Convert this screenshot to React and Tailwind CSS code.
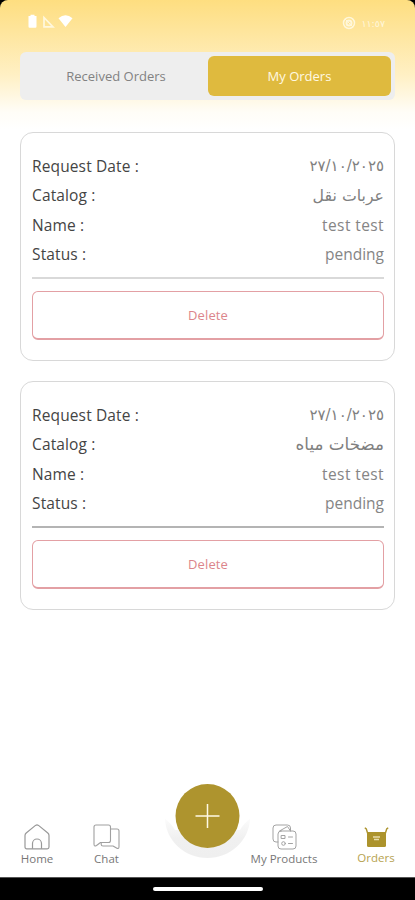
const orders = [
  { date: '٢٧/١٠/٢٠٢٥', catalog: 'عربات نقل', name: 'test test', status: 'pending', line: 'bg-[#d9d9d9]', catalogSize: 'text-[15.75px]' },
  { date: '٢٧/١٠/٢٠٢٥', catalog: 'مضخات مياه', name: 'test test', status: 'pending', line: 'bg-[#b4b4b4]', catalogSize: 'text-[16.75px]' },
];

function Row({ label, children, valueClass }) {
  return (
    <div className="flex h-[29.25px] items-center justify-between">
      <span className="text-[15.5px] tracking-[0.13px] text-[#444]">{label} :</span>
      <span className={valueClass}>{children}</span>
    </div>
  );
}

const arabic = 'font-["DejaVu_Sans",sans-serif] text-[#808080]';

function OrderCard({ order }) {
  return (
    <article className="flex h-[229px] flex-col rounded-[13px] border border-[#d8d8d8] bg-white pr-[10px] pl-[11px] pt-[19px]">
      <Row label="Request Date" valueClass={`${arabic} text-[15px] tracking-[0.4px]`}><bdo dir="ltr">{order.date}</bdo></Row>
      <Row label="Catalog" valueClass={`${arabic} ${order.catalogSize}`}><span dir="rtl">{order.catalog}</span></Row>
      <Row label="Name" valueClass="text-[15.5px] tracking-[0.4px] text-[#858585]">{order.name}</Row>
      <Row label="Status" valueClass="text-[15.5px] text-[#858585]">{order.status}</Row>
      <div className={`mt-[8px] h-[2px] shrink-0 ${order.line}`} />
      <button className="mt-[12px] flex h-[49px] shrink-0 items-center justify-center rounded-[6px] border border-b-2 border-[#e3a0a4] pt-[2px] text-[13px] tracking-[0.1px] text-[#dc858b]">
        Delete
      </button>
    </article>
  );
}

function HomeIcon() {
  return (
    <svg width="26" height="26" viewBox="0 0 26 26" fill="none" stroke="#999" strokeWidth="1.2" strokeLinejoin="round">
      <path d="M1 23V11.5Q1 10 2.2 9L11.5 1.4Q13 .4 14.5 1.4L23.8 9Q25 10 25 11.5V23Q25 24.8 23.2 24.8H2.8Q1 24.8 1 23Z" />
      <path d="M8.500 24.800V19.500a4.500 4.500 0 0 1 9 0v5.300" />
    </svg>
  );
}

function ChatIcon() {
  return (
    <svg width="27" height="26" viewBox="0 0 27 26" fill="none" stroke="#a0a0a0" strokeWidth="1.1" strokeLinejoin="round">
      <path d="M3 1H15.500Q17.500 1 17.500 3V16.500Q17.500 18.500 15.500 18.500H7.500L3.500 21.500Q1 23 1 20V3Q1 1 3 1Z" />
      <path d="M17.500 5H24Q26 5 26 7V22.500Q26 25.500 23.500 24L20 22H10Q8.200 22 8.200 20.500V18.500" />
    </svg>
  );
}

function ProductsIcon() {
  return (
    <svg width="25" height="26" viewBox="0 0 25 26" fill="none" stroke="#a3a3a3" strokeWidth="1" strokeLinejoin="round" strokeLinecap="round">
      <path d="M6 18H4Q1 18 1 15V4Q1 1 4 1H15.500Q18.500 1 18.500 4V7" />
      <path d="M9 7H21Q24 7 24 10V22Q24 25 21 25H9Q6 25 6 22V10Q6 7 9 7ZM7.500 7L15.500 2.500L18.500 7" />
      <rect x="9.500" y="11.500" width="3.500" height="3" />
      <circle cx="11.500" cy="19.500" r="1.800" />
      <path d="M16.500 13H20.500M16.500 19.500H20.500" />
    </svg>
  );
}

function OrdersIcon() {
  return (
    <svg width="25" height="21" viewBox="0 0 25 21">
      <path d="M3 5H22V18.500Q22 20 20.500 20H4.500Q3 20 3 18.500Z" fill="#ac932c" />
      <path d="M.8 .8L2.300 2L3.700 6.500M24.200 .8L22.700 2L21.300 6.500" fill="none" stroke="#ac932c" strokeWidth="1.400" />
      <path d="M9 10H16M10 12.500H15" stroke="#e6dcaa" strokeWidth="1.300" />
    </svg>
  );
}

export default function App() {
  return (
    <div className="bg-black font-['Open_Sans','Noto_Sans',sans-serif]">
      <div className="flex h-[900px] w-[415px] flex-col bg-black">
        <main className="flex h-[877px] shrink-0 flex-col rounded-t-[8px] bg-[linear-gradient(to_bottom,#fede80_0px,#fee6a0_35px,#fff0c4_75px,#fffdf7_112px,#ffffff_130px)]">
          <header className="flex h-[52px] shrink-0 items-start justify-between pt-[14px] pr-[30px] pl-[28px]">
            <svg width="46" height="15" viewBox="0 0 46 15" fill="#fff">
              <path d="M2.500 .800H6.500V2H8.500V12.500Q8.500 13.800 7.500 13.800H1.500Q.5 13.800 .5 12.500V2H2.500Z" />
              <path d="M16 3.500V12.800H25Z" fill="none" stroke="#fff8de" strokeWidth="1.700" />
              <path d="M30.500 4.200Q37.500-1.500 44.500 4.200L37.500 13Z" />
            </svg>
            <div className="flex items-center gap-[5px] pt-[1px]">
              <svg width="14" height="14" viewBox="0 0 14 14" fill="none" stroke="#fff7da">
                <circle cx="7" cy="7" r="5.500" strokeWidth="1.500" />
                <circle cx="7" cy="7" r="2.500" strokeWidth="2" />
                <path d="M3 3L11 11" />
              </svg>
              <bdo dir="ltr" className="pt-[2px] font-['DejaVu_Sans',sans-serif] text-[9.500px] leading-[14px] text-[#fff7dc]">١١:٥٧</bdo>
            </div>
          </header>

          <nav className="mx-[20px] flex h-[48px] shrink-0 rounded-[6px] bg-[#eeeeee] p-[4px] text-[13px]">
            <div className="flex flex-1 items-center justify-center pt-[2px] text-[#828282]">Received Orders</div>
            <div className="flex w-[183px] items-center justify-center rounded-[6px] bg-[#dfba3e] pt-[2px] text-[#fff9e2]">My Orders</div>
          </nav>

          <section className="mx-[20px] mt-[32px] flex flex-1 flex-col gap-[20px]">
            {orders.map((order) => <OrderCard key={order.catalog} order={order} />)}
          </section>

          <footer className="relative flex h-[60px] shrink-0 text-[11.500px] leading-[14px] text-[#777]">
            <div className="flex w-[74px] flex-col items-center pt-[7px]"><HomeIcon /><span className="mt-[2px]">Home</span></div>
            <div className="flex w-[65px] flex-col items-center pt-[7px]"><ChatIcon /><span className="mt-[2px]">Chat</span></div>
            <div className="ml-[100px] flex w-[90px] flex-col items-center pt-[7px]"><ProductsIcon /><span className="mt-[2px] whitespace-nowrap">My Products</span></div>
            <div className="ml-[17px] flex w-[60px] flex-col items-center pt-[10px] text-[#b6a250]"><OrdersIcon /><span className="mt-[3px]">Orders</span></div>
            <svg className="absolute -top-[35px] left-[162px]" width="91" height="78" viewBox="0 0 91 78">
              <defs>
                <linearGradient id="notch" x1="0" y1="0" x2="0" y2="1">
                  <stop offset="0" stopColor="#fbfbfb" />
                  <stop offset=".5" stopColor="#f0f0f0" />
                  <stop offset="1" stopColor="#efefef" />
                </linearGradient>
              </defs>
              <path d="M3 37Q9 41 13 48H78Q82 41 88 37C87 59 68 76 45.500 76S4 59 3 37Z" fill="url(#notch)" />
              <circle cx="45.500" cy="34" r="32" fill="#ae942e" />
              <path d="M33.500 34H57.500M45.500 22V46" stroke="#fff9e5" strokeWidth="1.500" />
            </svg>
          </footer>
        </main>
        <div className="flex flex-1 items-center justify-center border-t border-[#555]">
          <div className="h-[4px] w-[110px] rounded-full bg-white" />
        </div>
      </div>
    </div>
  );
}
